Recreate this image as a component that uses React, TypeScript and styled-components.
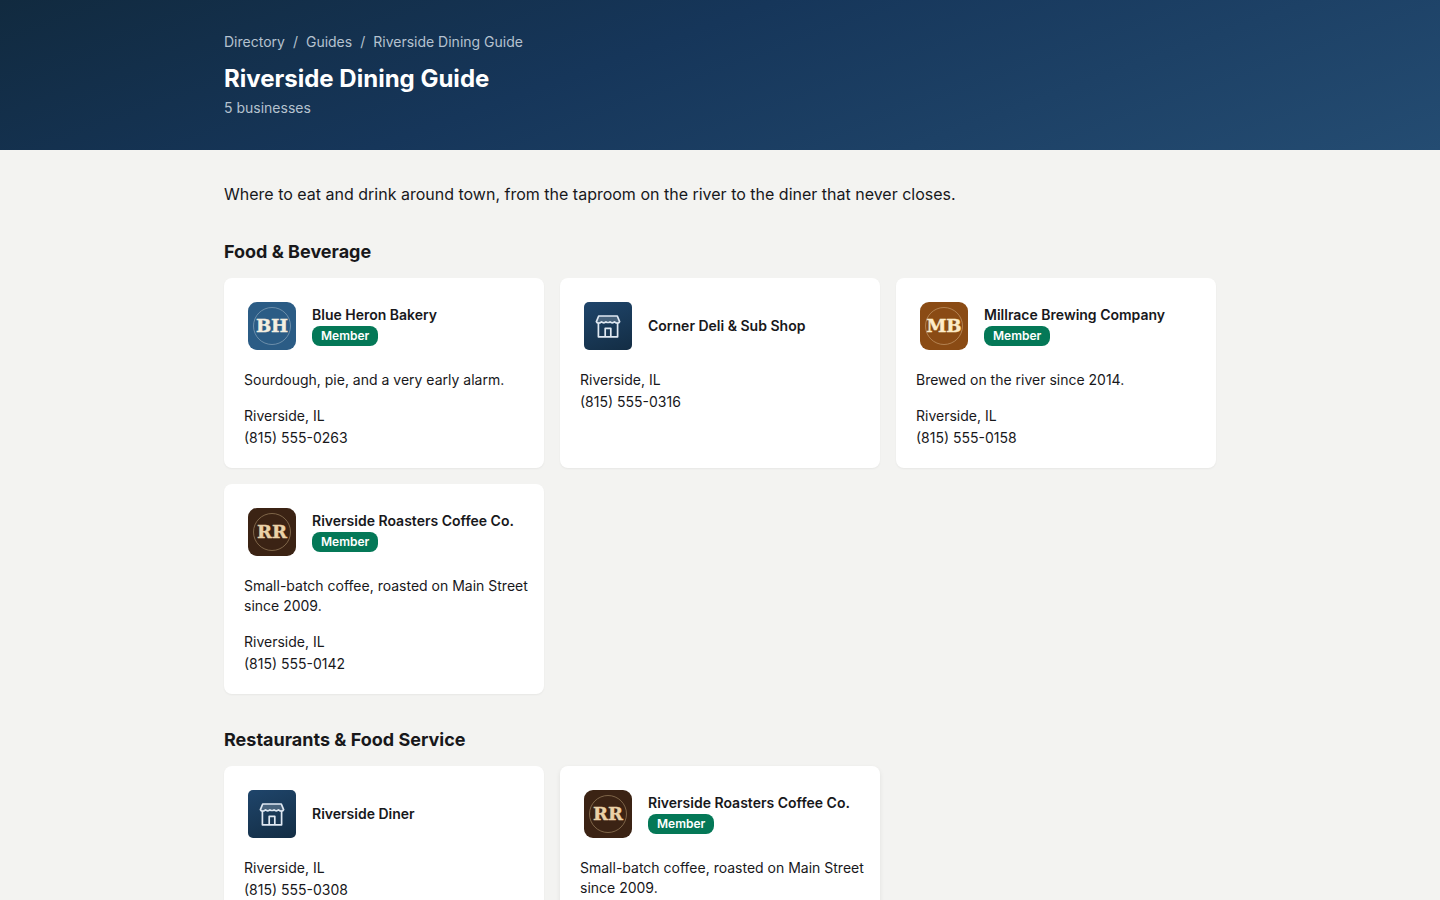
import React from "react";
import styled, { createGlobalStyle } from "styled-components";

const GlobalStyle = createGlobalStyle`
  *, *::before, *::after { box-sizing: border-box; }
  body {
    margin: 0;
    background: #f3f3f1;
    color: #18181b;
    font-family: Inter, "Liberation Sans", sans-serif;
    font-size: 14px;
    line-height: 20px;
  }
  h1, h2, h3, p, ul, ol { margin: 0; padding: 0; }
  ul, ol { list-style: none; }
  a { color: inherit; text-decoration: none; }
`;

const Container = styled.div`
  max-width: 1024px;
  margin: 0 auto;
  padding: 32px 16px;
`;

const Hero = styled.header`
  background: linear-gradient(160deg, #112a3f 0%, #16365a 42%, #244c72 100%);
  color: #ffffff;
`;

const Breadcrumbs = styled.ol`
  display: flex;
  gap: 8px;
  color: #b5c2cf;

  li + li {
    display: flex;
    gap: 8px;
  }
  li + li::before {
    content: "/";
  }
`;

const Title = styled.h1`
  margin-top: 12px;
  font-size: 24px;
  line-height: 30px;
  font-weight: 700;
`;

const Count = styled.p`
  margin-top: 4px;
  color: #b5c2cf;
`;

const Intro = styled.p`
  font-size: 16px;
  line-height: 24px;
`;

const Section = styled.section`
  margin-top: 32px;
`;

const SectionTitle = styled.h2`
  margin-bottom: 12px;
  font-size: 18px;
  line-height: 28px;
  font-weight: 700;
`;

const Grid = styled.div`
  display: grid;
  grid-template-columns: repeat(auto-fill, minmax(288px, 1fr));
  gap: 16px;
`;

const Card = styled.article<{ $raised?: boolean }>`
  display: flex;
  flex-direction: column;
  gap: 16px;
  padding: 20px 12px 20px 20px;
  border-radius: 8px;
  background: #ffffff;
  box-shadow: ${(p) =>
    p.$raised
      ? "0 2px 5px rgba(0, 0, 0, 0.08)"
      : "0 1px 2px rgba(0, 0, 0, 0.05)"};
`;

const CardHeader = styled.div`
  display: flex;
  align-items: center;
  gap: 16px;
  padding: 4px;
`;

const Logo = styled.svg`
  flex: none;
  width: 48px;
  height: 48px;
`;

const StoreTile = styled.div`
  display: grid;
  place-items: center;
  flex: none;
  width: 48px;
  height: 48px;
  border-radius: 5px;
  background: linear-gradient(160deg, #1f456b, #132d44);
`;

const Heading = styled.div`
  display: flex;
  flex-direction: column;
  align-items: flex-start;
`;

const Name = styled.h3`
  font-size: 14px;
  line-height: 22px;
  font-weight: 600;
`;

const Badge = styled.span`
  margin-bottom: 2px;
  padding: 0 9px;
  border-radius: 8px;
  background: #047857;
  color: #ffffff;
  font-size: 12px;
  line-height: 20px;
  font-weight: 600;
`;

const Contact = styled.ul`
  display: flex;
  flex-direction: column;
  gap: 2px;
`;

interface Brand {
  initials: string;
  background: string;
  ink: string;
  ring: string;
}

interface Business {
  name: string;
  phone: string;
  brand?: Brand;
  tagline?: string;
  raised?: boolean;
}

const roasters: Business = {
  name: "Riverside Roasters Coffee Co.",
  phone: "(815) 555-0142",
  tagline: "Small-batch coffee, roasted on Main Street since 2009.",
  brand: { initials: "RR", background: "#3b2314", ink: "#ead2a8", ring: "#8f7656" },
};

const sections: { title: string; businesses: Business[] }[] = [
  {
    title: "Food & Beverage",
    businesses: [
      {
        name: "Blue Heron Bakery",
        phone: "(815) 555-0263",
        tagline: "Sourdough, pie, and a very early alarm.",
        brand: { initials: "BH", background: "#2b5c85", ink: "#f5efe0", ring: "#7c9bb2" },
      },
      { name: "Corner Deli & Sub Shop", phone: "(815) 555-0316" },
      {
        name: "Millrace Brewing Company",
        phone: "(815) 555-0158",
        tagline: "Brewed on the river since 2014.",
        brand: { initials: "MB", background: "#8a4b14", ink: "#fdecc8", ring: "#bd8f60" },
      },
      roasters,
    ],
  },
  {
    title: "Restaurants & Food Service",
    businesses: [
      { name: "Riverside Diner", phone: "(815) 555-0308" },
      { ...roasters, raised: true },
    ],
  },
];

function Monogram({ initials, background, ink, ring }: Brand) {
  return (
    <Logo viewBox="0 0 48 48" aria-hidden="true">
      <rect width="48" height="48" rx="9" fill={background} />
      <circle cx="24" cy="24" r="18.5" fill="none" stroke={ring} strokeWidth="0.8" />
      <text
        x="24"
        y="30"
        textAnchor="middle"
        textRendering="geometricPrecision"
        fill={ink}
        stroke={ink}
        strokeWidth="0.4"
        fontFamily='"DejaVu Serif", serif'
        fontSize="18"
        fontWeight="700"
      >
        {initials}
      </text>
    </Logo>
  );
}

function StoreIcon() {
  return (
    <svg
      width="28"
      height="28"
      viewBox="0 0 28 28"
      fill="none"
      stroke="#dfe8f2"
      strokeWidth="1.7"
      strokeLinejoin="round"
      strokeLinecap="round"
      aria-hidden="true"
    >
      <path
        d="M4.700 4h18.600l2.300 5.600c-.7 1.900-3.700 2-5.100.2-1.300 1.500-3.300 1.500-4.500 0-1 .9-3 .9-4 0-1.200 1.500-3.200 1.500-4.500 0-1.400 1.800-4.400 1.700-5.100-.2z"
        fill="#ffffff"
        fillOpacity="0.2"
      />
      <path d="M4.400 11.500v13.300h19.200V11.500M11.200 24.800v-8.500h5.600v8.500" />
    </svg>
  );
}

function BusinessCard({ name, phone, brand, tagline, raised }: Business) {
  return (
    <Card $raised={raised}>
      <CardHeader>
        {brand ? (
          <Monogram {...brand} />
        ) : (
          <StoreTile>
            <StoreIcon />
          </StoreTile>
        )}
        <Heading>
          <Name>
            <a href="#business">{name}</a>
          </Name>
          {brand && <Badge>Member</Badge>}
        </Heading>
      </CardHeader>
      {tagline && <p>{tagline}</p>}
      <Contact>
        <li>Riverside, IL</li>
        <li>{phone}</li>
      </Contact>
    </Card>
  );
}

export default function App() {
  return (
    <>
      <GlobalStyle />
      <Hero>
        <Container>
          <nav aria-label="Breadcrumb">
            <Breadcrumbs>
              <li>
                <a href="#directory">Directory</a>
              </li>
              <li>
                <a href="#guides">Guides</a>
              </li>
              <li aria-current="page">Riverside Dining Guide</li>
            </Breadcrumbs>
          </nav>
          <Title>Riverside Dining Guide</Title>
          <Count>5 businesses</Count>
        </Container>
      </Hero>
      <Container as="main">
        <Intro>
          Where to eat and drink around town, from the taproom on the river to the diner that
          never closes.
        </Intro>
        {sections.map((section) => (
          <Section key={section.title}>
            <SectionTitle>{section.title}</SectionTitle>
            <Grid>
              {section.businesses.map((business) => (
                <BusinessCard key={business.name} {...business} />
              ))}
            </Grid>
          </Section>
        ))}
      </Container>
    </>
  );
}
